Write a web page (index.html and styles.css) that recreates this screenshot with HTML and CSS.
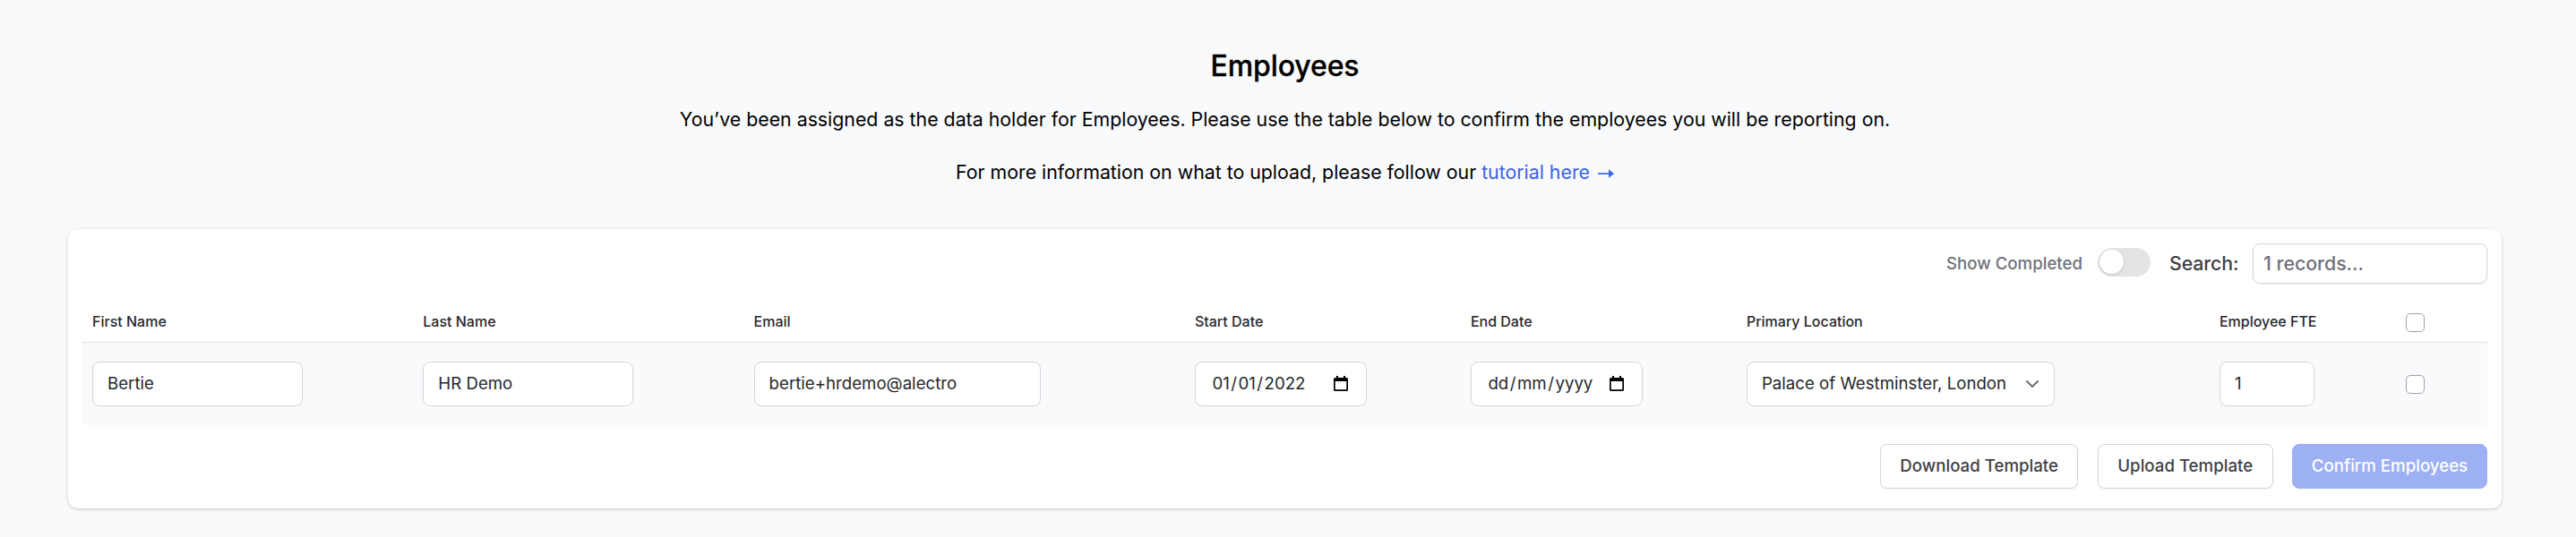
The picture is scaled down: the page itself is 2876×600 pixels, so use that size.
FILE: index.html
```html
<!DOCTYPE html>
<html lang="en">
<head>
<meta charset="utf-8">
<title>Employees</title>
<link rel="stylesheet" href="styles.css">
</head>
<body>
<main class="page">
  <header class="intro">
    <h1 class="title">Employees</h1>
    <p class="lead">You’ve been assigned as the data holder for Employees. Please use the table below to confirm the employees you will be reporting on.</p>
    <p class="lead">For more information on what to upload, please follow our <a class="link" href="#">tutorial here <svg class="arrow" viewBox="0 0 18 12"><path class="shaft" d="M0 6h14"/><path class="tip" d="M12 1.200l6 4.800-6 4.800z"/></svg></a></p>
  </header>
  <section class="card">
    <div class="toolbar">
      <span class="toggle-label">Show Completed</span>
      <span class="toggle"><span class="knob"></span></span>
      <span class="search-label">Search:</span>
      <div class="search">1 records...</div>
    </div>
    <div class="row head">
      <span>First Name</span>
      <span>Last Name</span>
      <span>Email</span>
      <span>Start Date</span>
      <span>End Date</span>
      <span>Primary Location</span>
      <span>Employee FTE</span>
      <span class="check"></span>
    </div>
    <div class="row record">
      <div class="field name">Bertie</div>
      <div class="field name">HR Demo</div>
      <div class="field email">bertie+hrdemo@alectro</div>
      <div class="field date"><span class="parts"><span>01</span><span>/</span><span>01</span><span>/</span><span>2022</span></span>
        <svg class="calendar" viewBox="0 0 16 17"><path d="M3 0h2v2h6V0h2v2h1.500q1.500 0 1.500 1.500v12q0 1.500-1.500 1.500h-13Q0 17 0 15.500v-12Q0 2 1.500 2H3zM1.700 6v9.300h12.600V6z" fill-rule="evenodd"/></svg>
      </div>
      <div class="field date"><span class="parts"><span>dd</span><span>/</span><span>mm</span><span>/</span><span>yyyy</span></span>
        <svg class="calendar" viewBox="0 0 16 17"><path d="M3 0h2v2h6V0h2v2h1.500q1.500 0 1.500 1.500v12q0 1.500-1.500 1.500h-13Q0 17 0 15.500v-12Q0 2 1.500 2H3zM1.700 6v9.300h12.600V6z" fill-rule="evenodd"/></svg>
      </div>
      <div class="field location">Palace of Westminster, London
        <svg class="chevron" viewBox="0 0 14 8"><path d="M1 1l6 6 6-6"/></svg>
      </div>
      <div class="field fte">1</div>
      <span class="check"></span>
    </div>
    <footer class="actions">
      <button class="btn download">Download Template</button>
      <button class="btn upload">Upload Template</button>
      <button class="btn primary">Confirm Employees</button>
    </footer>
  </section>
</main>
</body>
</html>
```
FILE: styles.css
```css
* { box-sizing: border-box; }
body {
  margin: 0;
  background: #f9fafc;
  font-family: Inter, "Liberation Sans", sans-serif;
  color: #27272a;
}
.page { height: 600px; padding: 53px 83px 0 76px; overflow: hidden; }
.intro { height: 203px; text-align: center; color: #000; }
.title { margin: 0 0 22px; font-size: 32px; line-height: 42px; font-weight: 500; letter-spacing: -.1px; -webkit-text-stroke: .3px #000; }
.lead { margin: 0 0 27px; font-size: 21.333px; line-height: 32px; letter-spacing: -.01px; }
.link { color: #3b63e6; text-decoration: none; }
.arrow { width: 18px; height: 12px; margin-left: 3px; }
.shaft { fill: none; stroke: #3b63e6; stroke-width: 1.700; }
.tip { fill: #3b63e6; }
.card {
  height: 312px;
  padding: 16px;
  background: #fff;
  border-radius: 11px;
  box-shadow: 0 1px 4px rgba(0, 0, 0, .1), 0 1px 3px rgba(0, 0, 0, .1);
}
.toolbar { display: flex; justify-content: flex-end; align-items: center; height: 45px; }
.toggle-label { margin: -1px 17px 0 0; font-size: 18.667px; font-weight: 500; color: #71717a; }
.toggle {
  width: 59px;
  height: 32px;
  margin: -3px 21px 0 0;
  padding: 2px;
  border-radius: 16px;
  background: #e4e4e7;
}
.knob {
  display: block;
  width: 27px;
  height: 27px;
  border-radius: 50%;
  background: #fff;
  box-shadow: 0 1px 3px rgba(0, 0, 0, .15);
}
.search-label { width: 77px; margin: -1px 16px 0 0; white-space: nowrap; font-size: 21.333px; font-weight: 500; color: #3f3f46; letter-spacing: -.1px; }
.search {
  width: 262px;
  height: 45px;
  padding-left: 11px;
  border: 1px solid #d4d4d8;
  border-radius: 8px;
  font-size: 21.333px;
  font-weight: 500;
  line-height: 42px;
  color: #71717a;
  box-shadow: 0 1px 2px rgba(0, 0, 0, .05);
}
.row {
  display: grid;
  grid-template-columns: 369.300px 369.300px 492.300px 308px 308px 528px 208px 1fr;
  align-items: center;
  padding-left: 11px;
}
.head { height: 66px; padding-top: 20px; border-bottom: 1px solid #dfdfe2; font-size: 16px; font-weight: 500; line-height: 20px; }
.head span { margin-top: -2px; }
.head .check { margin-top: 1px; }
.record { height: 92px; background: #f9fafc; }
.check { width: 21px; height: 21px; border: 1px solid #a1a1aa; border-radius: 5px; background: #fff; }
.field {
  display: flex;
  align-items: center;
  height: 50px;
  padding: 0 16px 1px;
  border: 1px solid #d4d4d8;
  border-radius: 8px;
  background: #fff;
  font-size: 18.667px;
}
.name { width: 235px; }
.email { width: 320px; }
.date { width: 192px; justify-content: space-between; padding: 0 20px 1px 18.500px; }
.parts { display: flex; gap: 1.500px; }
.location { width: 344px; justify-content: space-between; padding-right: 17px; }
.fte { width: 106px; }
.calendar { width: 16px; height: 17px; fill: #000; }
.chevron { width: 14px; height: 8px; fill: none; stroke: #71717a; stroke-width: 2; stroke-linecap: round; stroke-linejoin: round; }
.actions { display: flex; justify-content: flex-end; gap: 21.300px; padding-top: 21px; }
.btn {
  height: 50px;
  padding: 0 0 1px;
  border: 1px solid #d4d4d8;
  border-radius: 8px;
  background: #fff;
  color: #3f3f46;
  font: 500 18.667px Inter, "Liberation Sans", sans-serif;
  white-space: nowrap;
  box-shadow: 0 1px 2px rgba(0, 0, 0, .05);
}
.download { width: 221.500px; }
.upload { width: 196px; }
.primary { width: 218px; border-color: #9db0f3; background: #9db0f3; color: #fff; box-shadow: none; }
```
